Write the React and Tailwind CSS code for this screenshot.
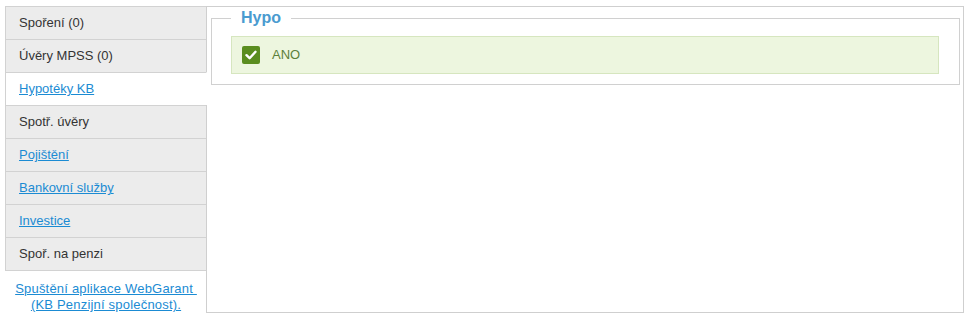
import React from "react";

const tabs = [
  { label: "Spoření (0)", link: false },
  { label: "Úvěry MPSS (0)", link: false },
  { label: "Hypotéky KB", link: true, active: true },
  { label: "Spotř. úvěry", link: false },
  { label: "Pojištění", link: true },
  { label: "Bankovní služby", link: true },
  { label: "Investice", link: true },
  { label: "Spoř. na penzi", link: false },
];

export default function App() {
  return (
    <div
      className="w-[968px] h-[318px] bg-white pt-[6px] pl-[5px] flex items-start text-[13px] text-[#333]"
      style={{ fontFamily: '"Liberation Sans", Arial, sans-serif' }}
    >
      <div className="w-[202px] flex flex-col shrink-0">
        {tabs.map((t, i) => (
          <div
            key={i}
            className={
              t.active
                ? "relative z-10 h-[33px] bg-white border-l border-t border-[#d2d2d2] border-r border-r-white flex items-center pl-[13px]"
                : "h-[33px] bg-[#ececec] border-l border-t border-r border-[#d2d2d2] flex items-center pl-[13px]" +
                  (i === tabs.length - 1 ? " border-b h-[34px]" : "")
            }
          >
            {t.link ? (
              <a href="#" className="text-[#1b8bd3] underline">
                {t.label}
              </a>
            ) : (
              <span>{t.label}</span>
            )}
          </div>
        ))}
        <div className="pt-[10px] text-center leading-[16px] tracking-[0.2px]">
          <a href="#" className="text-[#1b8bd3] underline">
            Spuštění aplikace WebGarant&nbsp;
            <br />
            (KB Penzijní společnost).
          </a>
        </div>
      </div>
      <div className="-ml-px w-[758px] h-[307px] border border-[#cfcfcf] pl-[4px] pr-[3px]">
        <fieldset className="border border-[#d0d0d0] pl-[19px] pr-[20px] pb-[10px] mt-[2px]">
          <legend className="px-[10px] text-[16px] leading-[18px] font-bold text-[#4a9bd0]">
            Hypo
          </legend>
          <div className="mt-[9px] h-[38px] bg-[#edf6df] border border-[#d6e6bf] flex items-center pl-[10px]">
            <span className="w-[18px] h-[18px] rounded-[2px] bg-[#5a8d1f] flex items-center justify-center">
              <svg width="12" height="10" viewBox="0 0 12 10">
                <path
                  d="M1.5 5.2 L4.6 8.2 L10.5 1.8"
                  fill="none"
                  stroke="white"
                  strokeWidth="2.4"
                  strokeLinecap="round"
                  strokeLinejoin="round"
                />
              </svg>
            </span>
            <span className="ml-[12px] text-[#5c7f3a]">ANO</span>
          </div>
        </fieldset>
      </div>
    </div>
  );
}
